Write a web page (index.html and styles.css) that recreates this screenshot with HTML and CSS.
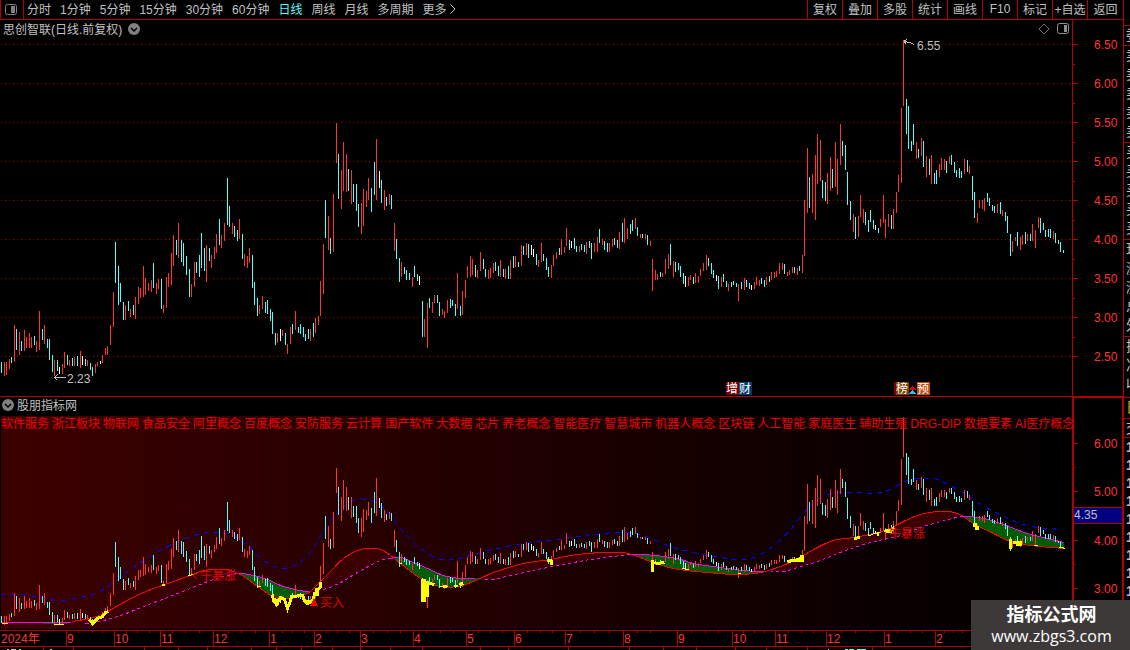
FILE: index.html
```html
<!DOCTYPE html>
<html lang="zh-CN">
<head>
    <meta charset="UTF-8">
    <meta name="viewport" content="width=device-width, initial-scale=1.0">
    <title>思创智联 日线</title>
    <link rel="stylesheet" href="styles.css">
</head>
<body>
    <main class="terminal">
        <nav class="toolbar">
            <button class="layout-button" aria-label="布局">
                <svg width="12" height="11" viewBox="0 0 12 11"><rect x="0.5" y="0.5" width="11" height="10" rx="2" fill="none" stroke="#808080"/><rect x="6" y="2" width="4" height="7" fill="#808080"/></svg>
            </button>
            <div class="periods">
                <button>分时</button>
                <button>1分钟</button>
                <button>5分钟</button>
                <button>15分钟</button>
                <button>30分钟</button>
                <button>60分钟</button>
                <button class="active">日线</button>
                <button>周线</button>
                <button>月线</button>
                <button>多周期</button>
                <button class="more">更多
                    <svg width="6" height="10" viewBox="0 0 6 10"><path d="M0.5 0.5L5 5L0.5 9.5" fill="none" stroke="#c0c0c0"/></svg>
                </button>
            </div>
            <div class="tools">
                <button>复权</button>
                <button>叠加</button>
                <button>多股</button>
                <button>统计</button>
                <button>画线</button>
                <button>F10</button>
                <button>标记</button>
                <button>+自选</button>
                <button>返回</button>
            </div>
        </nav>

        <section class="panel">
            <div class="panel-title">
                <span>思创智联(日线.前复权)</span>
                <svg width="12" height="12" viewBox="0 0 12 12"><circle cx="6" cy="6" r="6" fill="#808080"/><path d="M3 5L6 8L9 5" fill="none" stroke="#000" stroke-width="1.5"/></svg>
                <div class="panel-icons">
                    <svg width="12" height="12" viewBox="0 0 12 12"><path d="M6 1L11 6L6 11L1 6Z" fill="none" stroke="#707070"/></svg>
                    <svg width="12" height="11" viewBox="0 0 12 11"><rect x="0.5" y="0.5" width="11" height="10" rx="2" fill="none" stroke="#909090"/><rect x="7" y="2" width="3" height="7" fill="#909090"/></svg>
                </div>
            </div>
            <svg class="chart" id="priceChart" viewBox="0 20 1123 377"></svg>
        </section>

        <section class="panel">
            <div class="panel-title indicator-title">
                <svg width="12" height="12" viewBox="0 0 12 12"><circle cx="6" cy="6" r="6" fill="#808080"/><path d="M3 5L6 8L9 5" fill="none" stroke="#000" stroke-width="1.5"/></svg>
                <span>股朋指标网</span>
            </div>
            <div class="concepts">
                <span>软件服务</span>
                <span>浙江板块</span>
                <span>物联网</span>
                <span>食品安全</span>
                <span>阿里概念</span>
                <span>百度概念</span>
                <span>安防服务</span>
                <span>云计算</span>
                <span>国产软件</span>
                <span>大数据</span>
                <span>芯片</span>
                <span>养老概念</span>
                <span>智能医疗</span>
                <span>智慧城市</span>
                <span>机器人概念</span>
                <span>区块链</span>
                <span>人工智能</span>
                <span>家庭医生</span>
                <span>辅助生殖</span>
                <span>DRG-DIP</span>
                <span>数据要素</span>
                <span>AI医疗概念</span>
            </div>
            <svg class="chart" id="indicatorChart" viewBox="0 397 1123 253"></svg>
        </section>
    </main>

    <aside class="quotes">
        <div class="group">委</div>
        <div class="group five">卖<br>卖<br>卖<br>卖<br>卖</div>
        <div class="group five">买<br>买<br>买<br>买<br>买</div>
        <div class="group five">现<br>涨<br>涨<br>总<br>外</div>
        <div class="group three">换<br>净<br>收</div>
        <div class="group day">日</div>
        <div class="group trade">交</div>
        <div class="group ticks">1<br>1<br>1<br>1<br>1<br>1<br>1<br>1<br>1</div>
    </aside>

    <div class="watermark">
        <strong>指标公式网</strong>
        <a href="#">www.zbgs3.com</a>
    </div>

    <script src="chart.js"></script>
</body>
</html>
```
FILE: styles.css
```css
* {
    box-sizing: border-box;
}

body {
    margin: 0;
    height: 100vh;
    display: flex;
    position: relative;
    overflow: hidden;
    background-color: #000;
    color: #c0c0c0;
    font-family: "Liberation Sans", "Noto Sans CJK SC", sans-serif;
    font-size: 12px;
}

.terminal {
    flex: 1;
    min-width: 0;
}

button {
    padding: 0 0 2px;
    border: none;
    background: none;
    color: inherit;
    font: inherit;
    white-space: nowrap;
    cursor: pointer;
}

.toolbar {
    display: flex;
    height: 20px;
    border-bottom: 1px solid #b00000;
    border-left: 1px solid #b00000;
}

.layout-button {
    display: flex;
    align-items: center;
    padding: 0 6px 1px 4px;
    border-right: 1px solid #b00000;
}

.periods {
    display: flex;
    gap: 9px;
    padding-left: 3px;
    flex: 1;
}

.periods .active {
    color: #54fcfc;
}

.more {
    display: flex;
    align-items: center;
    gap: 3px;
}

.tools {
    display: flex;
}

.tools button {
    width: 35px;
    border-left: 1px solid #b00000;
}

.tools button:last-child {
    width: 36px;
}

.panel {
    position: relative;
}

.panel-title {
    position: absolute;
    top: 0;
    left: 0;
    width: 100%;
    height: 17px;
    padding: 0 54px 0 3px;
    display: flex;
    align-items: center;
    gap: 6px;
}

.indicator-title {
    height: 15px;
    padding-left: 2px;
    gap: 3px;
}

.panel-icons {
    display: flex;
    align-items: center;
    gap: 7px;
    margin-left: auto;
}

.concepts {
    position: absolute;
    top: 19px;
    left: 1px;
    display: flex;
    gap: 3px;
    line-height: 17px;
    white-space: nowrap;
    color: #f00000;
}

.chart {
    display: block;
    width: 100%;
    height: auto;
    shape-rendering: crispEdges;
}

.chart text {
    fill: #ff3232;
    font-size: 12px;
}

.chart .note {
    fill: #c0c0c0;
}

.chart .signal {
    fill: #e00000;
}

.chart .tag {
    fill: #fff;
}

.quotes {
    width: 7px;
    padding: 25px 0 0;
    border-left: 1px solid #b00000;
    overflow: hidden;
    font-size: 14px;
    line-height: 19px;
}

.group {
    padding-left: 2px;
    border-top: 1px solid #b00000;
    white-space: nowrap;
}

.five {
    padding-bottom: 1px;
}

.three {
    padding-bottom: 3px;
}

.day {
    height: 21px;
    color: #c0c000;
}

.trade {
    line-height: 18px;
}

.ticks {
    font-weight: bold;
    line-height: 18px;
}

.watermark {
    position: absolute;
    right: 0;
    bottom: 0;
    width: 159px;
    height: 50px;
    padding: 4px 0 0 2px;
    display: flex;
    flex-direction: column;
    align-items: center;
    background-color: #3d3939;
    color: #fff;
}

.watermark strong {
    font-size: 18px;
    line-height: 22px;
}

.watermark a {
    color: #fff;
    font-family: "Open Sans", sans-serif;
    font-size: 16px;
    line-height: 20px;
    text-decoration: none;
}
```
FILE: chart.js
```js
const RED = '#b00000';
const COLORS = { r: '#ff3232', c: '#54fcfc', w: '#ffffff' };

// x, high, low, colour
const BARS = `1 362 373 c,4 362 376 r,6 362 375 r,9 359 369 r,11 357 363 c,14 325 362 r,16 329 350 c,19 332 355 r,21 341 351 c,24 330 351 r,
26 337 348 r,29 333 348 r,31 337 348 r,34 336 345 c,36 341 352 r,39 311 350 r,42 329 340 c,44 325 344 r,47 339 348 c,49 339 360 c,
52 355 372 c,54 360 376 r,57 360 371 c,59 367 374 w,62 364 374 r,64 352 368 r,67 355 365 c,69 360 366 r,72 358 366 c,74 357 366 r,
77 356 366 c,80 351 368 r,82 356 365 w,85 359 366 c,87 360 366 r,90 363 370 c,92 367 376 c,95 364 373 r,97 362 366 r,100 361 364 w,
102 355 363 r,105 348 355 r,107 346 355 r,110 325 345 r,113 292 327 r,115 242 283 c,118 266 305 c,120 283 302 c,123 302 320 c,125 305 320 r,
128 301 311 c,130 309 317 r,133 305 315 c,135 297 319 r,138 287 304 r,140 288 298 r,143 266 297 r,145 278 295 r,148 283 291 r,151 280 292 r,
153 263 288 c,156 283 294 r,158 279 289 r,161 279 309 c,163 305 313 r,166 277 308 r,168 273 287 r,171 253 285 r,173 235 266 r,176 240 255 c,
178 223 258 r,181 240 262 c,183 243 266 c,186 256 275 c,189 269 297 c,191 284 297 r,194 262 287 r,196 262 273 c,199 255 277 c,201 233 268 c,
204 248 271 c,206 245 282 r,209 248 261 c,211 255 268 r,214 247 259 r,216 234 253 r,219 219 245 c,221 235 248 r,224 223 241 r,227 178 225 c,
229 206 227 c,232 223 234 r,234 226 237 c,237 230 241 c,239 219 239 r,242 234 259 c,244 254 266 r,247 256 268 r,249 248 263 r,252 255 288 c,
254 282 305 c,257 298 316 c,259 305 314 r,262 296 309 r,265 302 313 c,267 300 314 c,270 309 321 c,272 312 334 c,275 333 345 c,277 333 343 r,
280 329 341 w,282 330 336 r,285 333 345 c,287 344 354 r,290 327 344 r,292 324 334 c,295 311 330 r,298 327 333 c,300 324 334 c,303 327 337 c,
305 334 341 c,308 329 339 c,310 329 341 r,313 323 337 c,315 318 333 r,318 316 325 r,320 281 316 r,323 244 294 r,325 200 238 c,328 216 250 r,
330 238 254 c,333 194 252 r,336 123 163 r,338 154 199 c,341 170 209 r,343 142 191 r,346 154 192 r,348 169 191 c,351 170 204 r,353 184 202 c,
356 184 211 c,358 204 227 c,361 203 234 r,363 189 226 r,366 191 207 r,368 178 200 r,371 188 212 c,374 162 195 c,376 139 200 r,379 171 188 w,
381 180 203 c,384 190 210 r,386 197 206 c,389 194 205 r,391 195 209 c,394 223 251 r,396 239 259 c,399 258 282 c,401 262 277 r,404 267 274 c,
406 270 280 c,409 273 280 c,412 277 287 r,414 266 277 c,417 274 281 c,419 276 285 w,422 301 337 c,424 319 337 r,427 303 348 r,429 298 308 c,
432 302 313 r,434 295 303 r,437 295 303 c,439 302 316 c,442 309 315 r,444 311 318 r,447 300 313 r,450 299 308 c,452 300 306 c,455 304 316 c,
457 273 309 r,460 306 316 c,462 291 315 r,465 280 298 r,467 266 278 r,470 256 277 r,472 259 275 r,475 265 277 c,477 270 278 r,480 252 271 r,
483 259 269 c,485 269 277 c,488 270 279 r,490 268 278 r,493 263 273 r,495 262 271 c,498 266 276 c,500 260 277 r,503 269 277 c,505 269 279 r,
508 266 279 c,510 260 279 r,513 256 268 c,515 256 267 r,518 262 267 c,521 245 266 r,523 246 255 c,526 243 255 r,528 244 258 c,531 245 255 w,
533 249 257 w,536 254 265 c,538 260 267 r,541 243 262 r,543 254 261 c,546 258 270 c,548 267 277 c,551 265 278 r,553 255 266 r,556 252 259 r,
559 248 255 c,561 239 255 r,564 247 253 r,566 228 246 r,569 240 250 c,571 241 248 w,574 238 249 c,576 246 252 c,579 246 252 r,581 244 250 c,
584 245 252 c,586 242 254 r,589 241 248 c,591 243 259 c,594 243 252 r,597 237 252 r,599 229 243 c,602 239 245 r,604 241 250 c,607 243 252 c,
609 243 252 r,612 239 247 r,614 238 245 c,617 240 248 c,619 232 249 r,622 223 242 c,624 218 243 r,627 228 239 r,630 224 234 c,632 220 231 c,
635 218 229 r,637 227 236 c,640 234 238 r,642 234 238 c,645 234 239 r,647 235 245 c,650 241 246 r,652 259 291 r,655 270 280 r,657 274 280 r,
660 272 277 c,662 273 277 r,665 259 274 r,668 254 269 r,670 244 265 c,673 261 277 r,675 262 272 c,678 263 270 c,680 266 277 c,683 273 284 c,
685 276 287 w,688 277 286 r,690 275 280 r,693 277 284 c,695 273 283 r,698 276 283 r,700 269 276 r,703 263 271 r,706 255 270 r,708 258 266 c,
711 263 274 c,713 270 278 c,716 275 281 w,718 276 289 c,721 277 287 r,723 274 282 c,726 281 287 c,728 284 291 r,731 282 287 c,733 281 285 c,
736 283 287 c,738 284 301 r,741 282 289 c,744 278 290 r,746 280 287 c,749 283 289 c,751 285 290 w,754 282 289 r,756 277 285 r,759 280 286 r,
761 278 284 c,764 280 287 c,766 277 285 r,769 276 282 c,771 272 280 r,774 272 278 r,776 271 277 r,779 263 274 r,782 263 270 r,784 264 274 c,
787 272 276 r,789 270 275 r,792 267 273 r,794 267 273 c,797 268 275 r,799 266 271 c,802 255 273 r,804 200 256 r,807 148 213 r,809 177 208 c,
812 174 213 r,815 155 220 r,817 134 184 r,820 140 181 r,822 180 198 c,825 182 201 c,827 173 204 r,830 157 191 r,832 169 188 c,835 142 187 r,
837 159 195 r,840 124 165 r,842 141 156 c,845 145 170 c,847 172 205 c,850 201 220 c,853 214 232 r,855 217 239 c,858 216 237 r,860 195 217 r,
863 209 223 r,865 212 225 c,868 220 232 c,870 210 222 c,873 220 229 c,875 225 230 w,878 228 233 c,880 219 227 r,883 195 223 r,885 219 238 r,
888 214 227 r,891 215 229 c,893 209 229 r,896 192 213 r,898 175 192 r,901 108 183 r,903 40 106 r,906 99 134 c,908 106 149 c,911 141 151 c,
913 124 145 c,916 142 159 r,918 149 158 c,921 138 156 r,923 141 167 c,926 156 177 r,929 159 175 c,931 155 184 r,934 173 184 c,936 170 184 c,
939 164 177 r,941 158 170 r,944 159 170 r,946 161 173 c,949 156 164 r,951 155 165 c,954 162 173 c,956 170 177 c,959 168 178 c,961 171 178 c,
964 159 174 r,967 160 172 c,969 166 174 r,972 176 200 c,974 192 218 c,977 213 223 r,979 200 208 r,982 200 209 r,984 198 211 r,987 193 202 c,
989 198 206 c,992 205 211 c,994 206 213 c,997 204 213 r,1000 202 214 c,1002 210 216 r,1005 212 221 c,1007 216 233 c,1010 234 256 c,1012 241 252 r,
1015 237 241 r,1017 232 246 c,1020 237 250 r,1022 235 245 r,1025 232 244 c,1027 234 241 r,1030 234 241 c,1032 224 241 r,1035 230 248 r,1038 217 228 r,
1040 218 233 c,1043 223 230 c,1045 230 237 c,1048 229 237 c,1050 229 238 c,1053 231 239 r,1055 233 243 c,1058 240 244 c,1060 242 252 c,1063 250 253 c`
    .split(',').map(s => {
        const [x, top, bottom, color] = s.trim().split(' ');
        return { x: +x, top: +top, bottom: +bottom, color: COLORS[color] };
    });

const points = s => s.split(' ').map(p => p.split(',').map(Number));

const UPPER = points('1,594 20,594 40,597 60,600 80,597 97,592 113,582 133,567 150,556 173,543 197,534 213,532 230,534 247,545 263,560 282,568 297,563 310,552 320,536 330,520 340,509 353,500 367,499 380,505 390,515 400,528 413,542 427,553 440,559 453,559 470,555 497,548 523,543 550,540 577,536 603,533 623,532 643,535 660,542 673,547 697,553 720,557 743,559 760,554 777,542 790,529 803,513 817,499 833,493 853,492 873,493 887,490 907,480 923,478 937,479 953,487 967,495 980,504 997,513 1017,522 1037,527 1063,529');
const FAST = points('42,624 64,624 72,621 90,618 107,611 123,602 143,592 167,583 190,575 200,571 213,569 230,570 243,576 260,588 273,596 287,598 307,593 317,584 330,571 343,558 357,550 367,548 380,549 390,555 400,563 413,573 427,582 440,586 457,586 473,581 493,572 523,563 550,559 577,554 603,552 623,552 637,556 650,561 673,568 707,572 737,574 760,572 780,566 797,558 817,547 833,540 853,537 873,533 887,529 903,521 920,514 940,511 957,513 973,523 993,533 1010,541 1030,545 1063,548');
const SLOW = points('1,622 71,622 85,623 103,620 123,614 143,606 167,597 190,588 210,580 227,575 239,573 253,575 267,579 283,586 307,591 323,589 340,582 357,572 380,560 390,558 400,557 413,562 427,568 443,575 460,578 475,578 490,579 510,575 537,569 563,564 590,559 613,556 632,554 655,555 680,559 693,563 720,567 743,570 763,571 783,571 797,567 817,561 837,553 860,545 883,539 900,535 920,527 937,522 952,518 963,516 983,518 1003,524 1027,533 1047,538 1063,542');

function add(svg, name, attrs, text) {
    const el = document.createElementNS('http://www.w3.org/2000/svg', name);
    for (const key in attrs) el.setAttribute(key, attrs[key]);
    if (text) el.textContent = text;
    svg.appendChild(el);
    return el;
}

function box(svg, x, y, width, height, fill) {
    add(svg, 'rect', { x, y, width, height, fill });
}

function label(svg, x, y, text, cls) {
    add(svg, 'text', { x, y, class: cls || '' }, text);
}

function line(svg, pts, stroke, dash, width) {
    add(svg, 'polyline', {
        points: pts.map(p => (p[0] + 0.5) + ',' + (p[1] + 0.5)).join(' '),
        fill: 'none', stroke, 'stroke-width': width || 1, 'stroke-dasharray': dash || 'none'
    });
}

// cubic through the points, so the averages bend smoothly
function valueAt(pts, x) {
    const i = Math.max(1, pts.findIndex(p => p[0] >= x));
    const slope = k => {
        const a = pts[Math.max(0, k - 1)];
        const b = pts[Math.min(pts.length - 1, k + 1)];
        return (b[1] - a[1]) / (b[0] - a[0]);
    };
    const [x0, y0] = pts[i - 1];
    const [x1, y1] = pts[i];
    const w = x1 - x0;
    const t = (x - x0) / w;
    return y0 * (2 * t ** 3 - 3 * t ** 2 + 1) + slope(i - 1) * w * (t ** 3 - 2 * t ** 2 + t)
        + y1 * (3 * t ** 2 - 2 * t ** 3) + slope(i) * w * (t ** 3 - t ** 2);
}

function section(pts, from, to) {
    const out = [];
    for (let x = from; x <= to; x++) out.push([x, valueAt(pts, x)]);
    return out;
}

function drawPrice() {
    const svg = document.getElementById('priceChart');
    for (let i = 0; i < 9; i++) {
        const y = 44 + i * 39;
        add(svg, 'line', { x1: 1, x2: 1072, y1: y + 0.5, y2: y + 0.5, stroke: '#a00000', 'stroke-dasharray': '1 3' });
        box(svg, 1073, y, 5, 1, RED);
        if (i < 8) box(svg, 1073, y + 20, 2, 1, RED);
        label(svg, 1094, y + 5, (6.5 - i * 0.5).toFixed(2));
    }
    BARS.forEach(b => box(svg, b.x, b.top, 1, b.bottom - b.top, b.color));

    line(svg, [[54, 377], [65, 377]], '#c0c0c0');
    line(svg, [[57, 374], [54, 377], [57, 380]], '#c0c0c0');
    label(svg, 67, 383, '2.23', 'note');
    line(svg, [[904, 41], [909, 42], [914, 44]], '#c0c0c0');
    line(svg, [[907, 39], [904, 40], [905, 44]], '#c0c0c0');
    label(svg, 917, 50, '6.55', 'note');

    box(svg, 726, 382, 13, 13, '#800000');
    box(svg, 739, 382, 13, 13, '#003c70');
    box(svg, 894, 382, 2, 13, '#800000');
    box(svg, 896, 382, 13, 13, '#804000');
    box(svg, 917, 382, 13, 13, '#c04a10');
    label(svg, 726, 393, '增', 'tag');
    label(svg, 739, 393, '财', 'tag');
    label(svg, 896, 393, '榜', 'tag');
    label(svg, 917, 393, '预', 'tag');
    add(svg, 'path', { d: 'M912.5 386L916 390H909Z', fill: '#e00000' });
    add(svg, 'path', { d: 'M912.5 390L916 394H909Z', fill: '#20c0ff' });

    box(svg, 1072, 20, 1, 377, RED);
    box(svg, 0, 396, 1123, 1, RED);
}

function drawIndicator() {
    const svg = document.getElementById('indicatorChart');
    const defs = add(svg, 'defs', {});
    const fade = add(defs, 'linearGradient', { id: 'fade' });
    add(fade, 'stop', { offset: 0, 'stop-color': '#3c0000' });
    add(fade, 'stop', { offset: 1, 'stop-color': '#000000' });
    box(svg, 1, 416, 1071, 213, 'url(#fade)');

    // band between the two averages
    for (let x = 42; x <= 1063; x++) {
        const fast = valueAt(FAST, x);
        const slow = valueAt(SLOW, x);
        const top = Math.round(Math.min(fast, slow));
        box(svg, x, top, 1, Math.round(Math.max(fast, slow)) - top, fast > slow ? '#005c00' : '#3a0000');
    }

    line(svg, section(UPPER, 1, 1063), '#0000ff', '5 5');
    line(svg, section(FAST, 72, 1063), '#ff0000');
    [[1, 71], [239, 309], [390, 475], [632, 763], [963, 1063]].forEach(r => line(svg, section(SLOW, r[0], r[1]), '#ff00ff'));
    [[85, 239], [323, 390], [485, 632], [770, 963]].forEach(r => line(svg, section(SLOW, r[0], r[1]), '#ff00ff', '3 3'));

    BARS.forEach(b => {
        const top = Math.round(443.5 + (b.top - 83.5) * 0.6205);
        const bottom = Math.round(443.5 + (b.bottom - 83.5) * 0.6205);
        box(svg, b.x, top, 1, Math.max(1, bottom - top), b.color);
    });

    // oversold closes
    ['1,623 7,623', '53,624 63,624', '188,575 193,574', '256,586 260,586', '398,563 401,563', '438,586 447,586',
     '682,568 689,569', '737,573 740,573', '1033,545 1037,545', '1059,547 1065,548', '867,535 870,535 873,533 880,532']
        .forEach(s => line(svg, points(s), '#ffff00'));
    ['89,619 92,623 97,618 102,616 105,612 108,611', '272,594 273,600 276,604 280,597 284,599 287,608 290,600 291,596 302,595 304,600 307,603 312,600 314,594 317,590 320,586 320,581',
     '429,583 434,584', '459,584 463,583', '654,562 657,563 664,562', '787,561 793,560 799,559', '1012,542 1021,542', '884,530 889,531 894,527']
        .forEach(s => line(svg, points(s), '#ffff00', '', 3));
    [[162, 584, 3, 2], [421, 579, 5, 23], [426, 581, 3, 16], [443, 585, 4, 3], [454, 585, 4, 2], [547, 559, 5, 3], [550, 560, 3, 5],
     [651, 560, 3, 12], [800, 555, 4, 7], [796, 558, 5, 4], [854, 537, 3, 3], [857, 536, 3, 3], [877, 533, 2, 3], [886, 529, 6, 4],
     [973, 523, 4, 4], [975, 526, 4, 4], [1009, 539, 3, 10], [1016, 542, 6, 4], [275, 599, 4, 6], [306, 600, 6, 4], [315, 588, 4, 8]]
        .forEach(r => box(svg, ...r, '#ffff00'));

    line(svg, [[198, 572], [193, 575], [197, 579]], '#e00000');
    label(svg, 200, 580, '牛暴涨', 'signal');
    label(svg, 889, 538, '牛暴涨', 'signal');
    label(svg, 320, 607, '买入', 'signal');
    add(svg, 'path', { d: 'M314 598L318 606H310Z', fill: '#ff0000' });

    // time axis
    box(svg, 0, 630, 1072, 1, RED);
    box(svg, 0, 646, 1072, 1, RED);
    label(svg, 1, 643, '2024年');
    [[66, '9'], [114, '10'], [160, '11'], [213, '12'], [269, '1'], [314, '2'], [360, '3'], [413, '4'], [466, '5'], [514, '6'],
     [565, '7'], [623, '8'], [677, '9'], [732, '10'], [775, '11'], [826, '12'], [884, '1'], [935, '2']].forEach(m => {
        box(svg, m[0], 630, 1, 17, RED);
        label(svg, m[0] + 1, 643, m[1]);
    });
    [78, 92, 102, 126, 137, 149, 172, 185, 199, 228, 241, 255, 282, 292, 304, 326, 337, 349, 373, 387, 400, 426, 440, 453, 478, 490, 502,
     527, 540, 552, 580, 594, 609, 637, 650, 691, 705, 718, 743, 754, 764, 788, 801, 813, 841, 855, 870, 897, 910, 922, 944, 953, 962]
        .forEach(x => box(svg, x, 631, 1, 2, RED));
    [43, 73, 144, 178, 207, 251, 276, 301, 332, 360, 390, 422, 480, 508, 568, 629, 663, 696, 735, 766, 807, 872]
        .forEach(x => box(svg, x, 647, 1, 3, RED));
    [[7, 2], [11, 5], [19, 2], [50, 2]].forEach(r => box(svg, r[0], 649, r[1], 1, '#c0c0c0'));
    [[828, 1], [845, 3], [849, 5], [857, 9]].forEach(r => box(svg, r[0], 649, r[1], 1, '#54fcfc'));

    // value axis
    for (let i = 0; i < 4; i++) {
        const y = Math.round(443 + i * 48.4);
        box(svg, 1074, y, 4, 1, RED);
        box(svg, 1074, y + 24, 2, 1, RED);
        label(svg, 1094, y + 5, (6 - i).toFixed(2));
    }
    box(svg, 1074, 507, 48, 17, '#000080');
    box(svg, 1074, 507, 48, 1, RED);
    box(svg, 1074, 523, 48, 1, RED);
    label(svg, 1074, 519, '4.35', 'note');
    box(svg, 1072, 397, 2, 253, RED);
    box(svg, 1122, 397, 1, 253, RED);
    box(svg, 1072, 397, 51, 1, RED);
}

drawPrice();
drawIndicator();
```
